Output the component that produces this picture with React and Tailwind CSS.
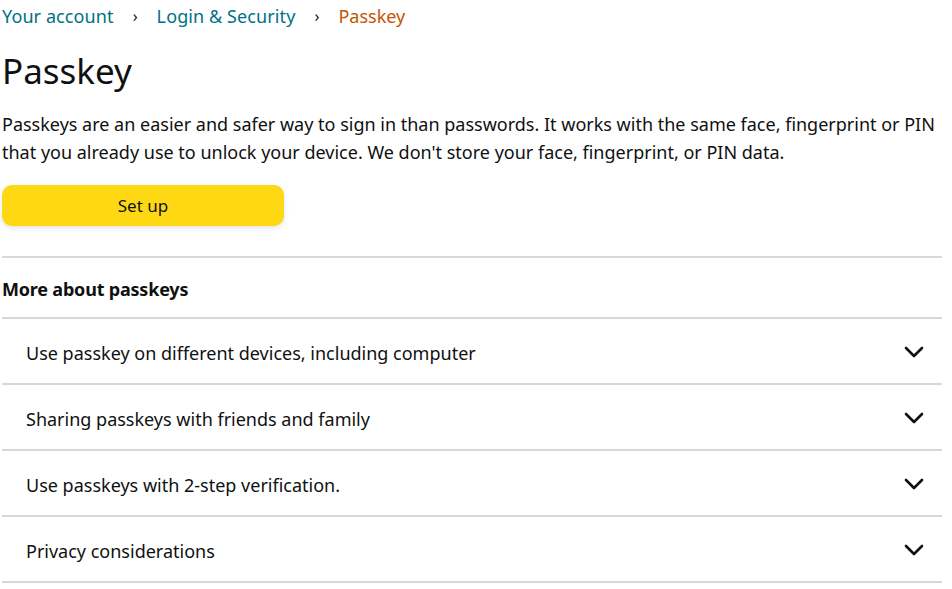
import React from "react";

const Chevron = () => (
  <svg width="20" height="14" viewBox="0 0 20 14" className="mr-[18px]">
    <path d="M2 3 L10 11 L18 3" fill="none" stroke="#0F1111" strokeWidth="2.6" strokeLinecap="round" strokeLinejoin="round" />
  </svg>
);

const rows = [
  "Use passkey on different devices, including computer",
  "Sharing passkeys with friends and family",
  "Use passkeys with 2-step verification.",
  "Privacy considerations",
];

export default function App() {
  return (
    <div
      className="w-[952px] h-[589px] bg-white pl-[2px] pr-[10px] text-[#0F1111] overflow-hidden"
      style={{ fontFamily: '"Noto Sans", "Open Sans", Arial, sans-serif' }}
    >
      <div className="h-[32px] flex items-center text-[18px] leading-[24px]">
        <span className="text-[#007185] tracking-[0.1px]">Your account</span>
        <span className="mx-[19px] text-[#0F1111] text-[16px]">›</span>
        <span className="text-[#007185] tracking-[0.1px]">Login &amp; Security</span>
        <span className="mx-[19px] text-[#0F1111] text-[16px]">›</span>
        <span className="text-[#C45500]">Passkey</span>
      </div>
      <h1 className="mt-[18px] text-[35px] leading-[42px] font-normal">Passkey</h1>
      <p className="mt-[18px] text-[18px] leading-[28px]">
        Passkeys are an easier and safer way to sign in than passwords. It works with the same face, fingerprint or PIN
        that you already use to unlock your device. We don't store your face, fingerprint, or PIN data.
      </p>
      <button className="mt-[19px] w-[282px] h-[41px] rounded-[10px] bg-[#FFD814] text-[17px] shadow-[0_2px_5px_rgba(213,217,217,0.7)] flex items-center justify-center">
        Set up
      </button>
      <div className="mt-[30px] border-t-2 border-[#D5D9D9]" />
      <div className="h-[59px] pt-[3px] flex items-center font-bold text-[18px] tracking-[-0.2px]">More about passkeys</div>
      <div className="border-t-2 border-[#D5D9D9]" />
      {rows.map((r) => (
        <div key={r}>
          <div className="h-[64px] pt-[5px] flex items-center justify-between pl-[24px] text-[18px]">
            <span>{r}</span>
            <span className="-mt-[3px]">
              <Chevron />
            </span>
          </div>
          <div className="border-t-2 border-[#D5D9D9]" />
        </div>
      ))}
    </div>
  );
}
